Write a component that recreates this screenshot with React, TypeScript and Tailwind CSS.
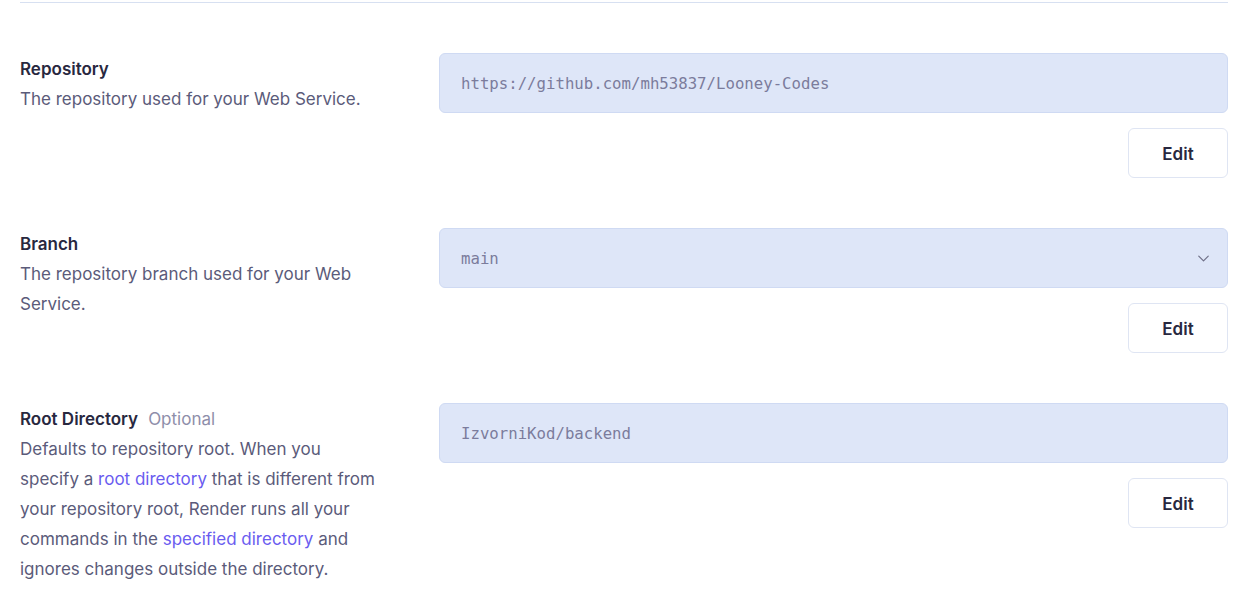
import { ChevronDown } from "lucide-react";

const SANS = "font-['Inter','Noto_Sans',sans-serif]";
const MONO = "font-['DejaVu_Sans_Mono','Liberation_Mono',monospace]";

function EditButton() {
  return (
    <div className="flex justify-end mt-[15px]">
      <button
        className={`w-[100px] h-[50px] pt-1 rounded-md border border-[#dfe5f3] bg-white text-[17px] font-semibold text-[#28283f] ${SANS}`}
      >
        Edit
      </button>
    </div>
  );
}

function Field({ value, select }: { value: string; select?: boolean }) {
  return (
    <div className="flex items-center justify-between h-[60px] rounded-md border border-[#cfdaf3] bg-[#dee6f8] pl-[21px] pr-[14px]">
      <span className={`pt-[2px] text-[15.7px] text-[#7b7c9c] ${MONO}`}>{value}</span>
      {select && <ChevronDown size={19} strokeWidth={1.5} className="text-[#6f7088]" />}
    </div>
  );
}

function Row({
  title,
  optional,
  children,
  value,
  select,
}: {
  title: string;
  optional?: boolean;
  children: React.ReactNode;
  value: string;
  select?: boolean;
}) {
  return (
    <div className="grid grid-cols-[358px_1fr] gap-[61px]">
      <div className={`pt-[1px] ${SANS}`}>
        <div className="flex items-baseline gap-[10px] leading-[30px]">
          <span className="text-[17px] font-semibold text-[#28283f]">{title}</span>
          {optional && <span className="text-[17px] text-[#8e8eaa]">Optional</span>}
        </div>
        <p className="text-[17px] leading-[30px] text-[#5b5b7a]">{children}</p>
      </div>
      <div>
        <Field value={value} select={select} />
        <EditButton />
      </div>
    </div>
  );
}

export default function App() {
  return (
    <div className="min-h-screen bg-white pl-5 pr-[23px]">
      <div className="border-t border-[#d7e0f1] mt-[2px]" />
      <div className="flex flex-col gap-[50px] pt-[50px]">
        <Row title="Repository" value="https://github.com/mh53837/Looney-Codes">
          The repository used for your Web Service.
        </Row>
        <Row title="Branch" value="main" select>
          The repository branch used for your Web Service.
        </Row>
        <Row title="Root Directory" optional value="IzvorniKod/backend">
          Defaults to repository root. When you specify a{" "}
          <a className="text-[#6a5cf0]">root directory</a> that is different from your
          repository root, Render runs all your commands in the{" "}
          <a className="text-[#6a5cf0]">specified directory</a> and ignores changes outside the
          directory.
        </Row>
      </div>
    </div>
  );
}
